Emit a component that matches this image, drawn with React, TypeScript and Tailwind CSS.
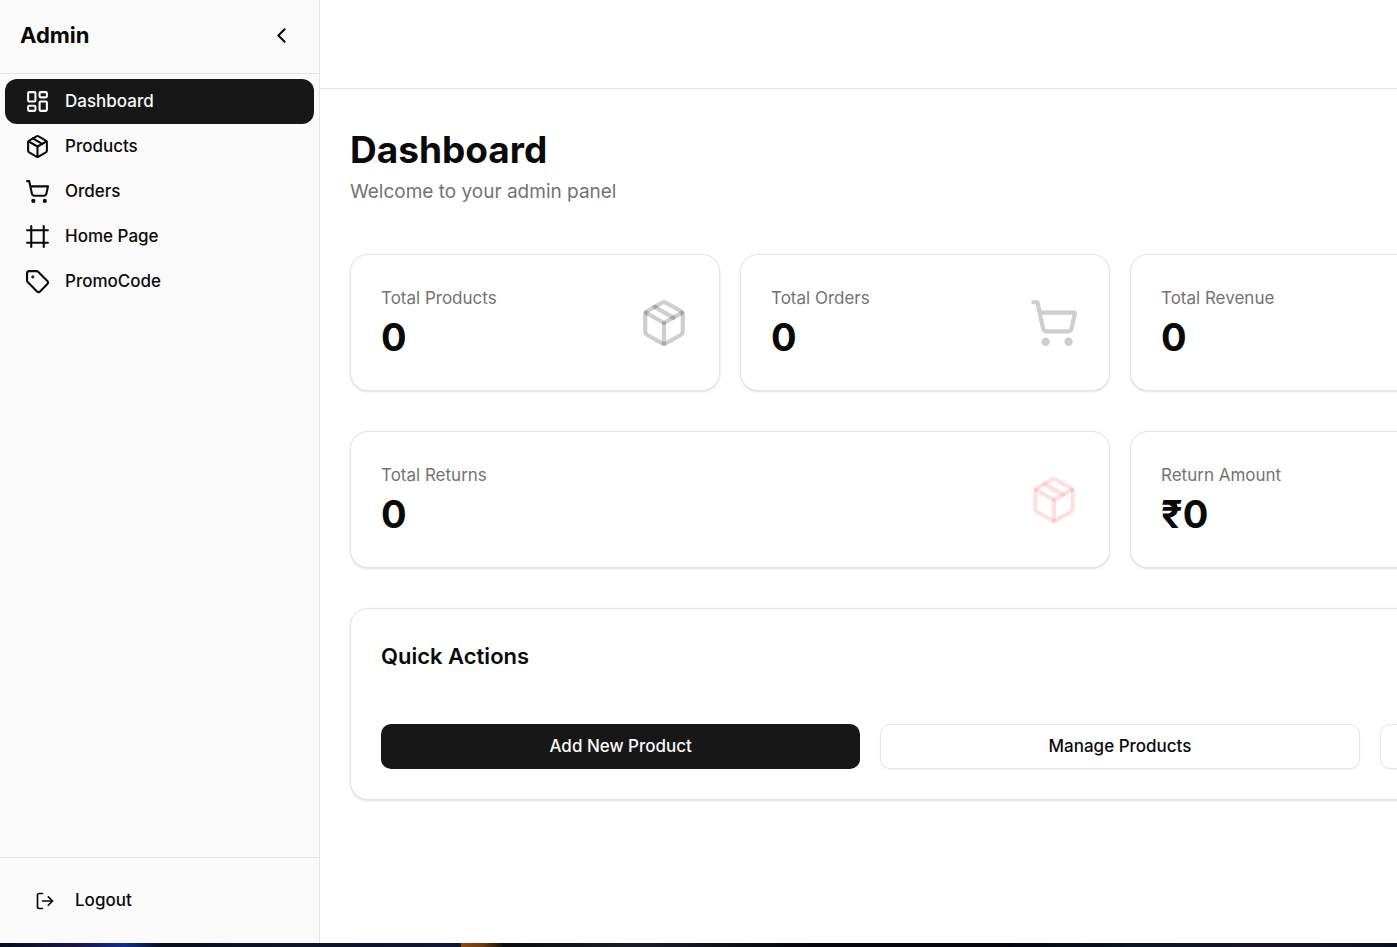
import React, { useState } from "react";
import {
  ChevronLeft,
  Frame,
  LayoutDashboard,
  LogOut,
  Package,
  ShoppingCart,
  Tag,
} from "lucide-react";

const navItems = [
  { name: "Dashboard", icon: LayoutDashboard },
  { name: "Products", icon: Package },
  { name: "Orders", icon: ShoppingCart },
  { name: "Home Page", icon: Frame },
  { name: "PromoCode", icon: Tag },
];

const Sidebar = () => {
  const [active, setActive] = useState("Dashboard");

  return (
    <aside className="flex w-80 shrink-0 flex-col border-r border-neutral-200 bg-neutral-50">
      <div className="flex items-center justify-between border-b border-neutral-200 pt-[17px] pr-5 pb-5 pl-5">
        <h2 className="text-[22px] leading-9 font-bold">Admin</h2>
        <button type="button" aria-label="Collapse sidebar" className="rounded-md p-[5px]">
          <ChevronLeft size={25} />
        </button>
      </div>

      <nav className="flex-1 p-[5px]">
        {navItems.map((item) => (
          <a
            key={item.name}
            href="#"
            onClick={() => setActive(item.name)}
            className={
              active === item.name
                ? "flex h-[45px] items-center gap-[15px] rounded-xl bg-neutral-900 px-5 text-[17px] font-medium text-neutral-50"
                : "flex h-[45px] items-center gap-[15px] rounded-xl px-5 text-[17px] font-medium"
            }
          >
            <item.icon size={25} />
            {item.name}
          </a>
        ))}
      </nav>

      <div className="border-t border-neutral-200 p-5">
        <button
          type="button"
          className="flex h-[45px] w-full items-center gap-5 rounded-xl px-[15px] text-[17px] font-medium"
        >
          <LogOut size={20} />
          Logout
        </button>
      </div>
    </aside>
  );
};

type StatCardProps = {
  label: string;
  value: string;
  icon?: React.ReactNode;
  wide?: boolean;
};

const StatCard = ({ label, value, icon, wide }: StatCardProps) => (
  <div
    className={
      wide
        ? "col-span-2 flex items-center justify-between rounded-[18px] border border-neutral-200 bg-white p-[30px] shadow-sm"
        : "flex items-center justify-between rounded-[18px] border border-neutral-200 bg-white p-[30px] shadow-sm"
    }
  >
    <div>
      <p className="text-[17px] leading-[27px] text-neutral-500">{label}</p>
      <p className="mt-[3px] text-[38px] leading-[45px] font-bold">{value}</p>
    </div>
    {icon}
  </div>
);

const App = () => {
  return (
    <div className="flex h-screen flex-col overflow-hidden bg-white font-['Inter',sans-serif] text-neutral-950">
      <div className="flex min-h-0 flex-1">
        <Sidebar />

        <div className="min-w-0 flex-1 overflow-hidden">
          <header className="h-[89px] border-b border-neutral-200" />

          {/* Le contenu garde une largeur minimale et déborde à droite */}
          <main className="min-w-[1600px] px-[30px] pt-[38px]">
            <h1 className="text-[37px] leading-[45px] font-bold">Dashboard</h1>
            <p className="mt-[5px] text-[19px] leading-[30px] text-neutral-500">
              Welcome to your admin panel
            </p>

            <div className="mt-[47px] grid grid-cols-4 gap-x-5 gap-y-10">
              <StatCard
                label="Total Products"
                value="0"
                icon={<Package size={50} className="text-neutral-950/20" />}
              />
              <StatCard
                label="Total Orders"
                value="0"
                icon={<ShoppingCart size={50} className="text-neutral-950/20" />}
              />
              <StatCard label="Total Revenue" value="0" />
            </div>

            <div className="mt-10 grid grid-cols-4 gap-5">
              <StatCard
                wide
                label="Total Returns"
                value="0"
                icon={<Package size={50} className="text-red-400/20" />}
              />
              <StatCard wide label="Return Amount" value="₹0" />
            </div>

            <section className="mt-10 rounded-[18px] border border-neutral-200 bg-white p-[30px] shadow-sm">
              <h2 className="text-[22px] leading-[35px] font-semibold">Quick Actions</h2>
              <div className="mt-[50px] grid grid-cols-3 gap-5 text-[17px] font-medium">
                <button type="button" className="h-[45px] rounded-[10px] bg-neutral-900 text-neutral-50">
                  Add New Product
                </button>
                <button type="button" className="rounded-[10px] border border-neutral-200 shadow-xs">
                  Manage Products
                </button>
                <button
                  type="button"
                  aria-label="Manage Orders"
                  className="rounded-[10px] border border-neutral-200 shadow-xs"
                />
              </div>
            </section>
          </main>
        </div>
      </div>

      {/* Bande sombre en bas de la fenêtre */}
      <div className="flex h-1 shrink-0">
        <div className="w-[33%] bg-[linear-gradient(90deg,#070d1f_0%,#1c1440_16%,#132c86_27%,#0a0d1a_35%,#11142a_70%,#141634_100%)]" />
        <div className="w-[3%] bg-[linear-gradient(90deg,#8a4b14_0%,#6b3a12_50%,#14100e_100%)]" />
        <div className="flex-1 bg-[linear-gradient(90deg,#0a0b0e_0%,#1a1e24_15%,#04040a_35%,#04040a_55%,#0a1422_70%,#1a1428_85%,#0b1020_100%)]" />
      </div>
    </div>
  );
};

export default App;
